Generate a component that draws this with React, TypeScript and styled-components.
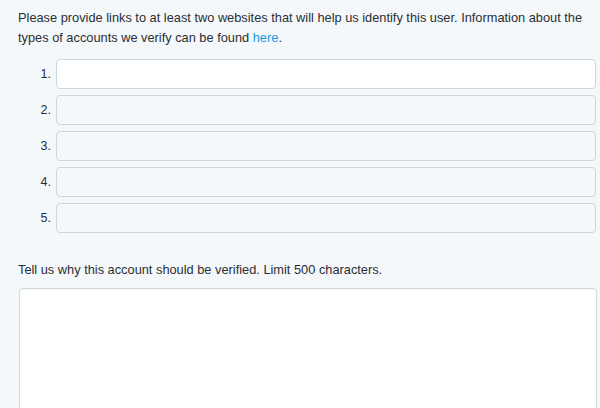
import { createGlobalStyle, styled } from "styled-components";

const GlobalStyle = createGlobalStyle`
  html, body {
    margin: 0;
    padding: 0;
    background: #f5f8fa;
  }
  body {
    font-family: "Liberation Sans", Arial, sans-serif;
    color: #292f33;
  }
`;

const Page = styled.div`
  width: 600px;
  height: 408px;
  overflow: hidden;
  padding: 8px 4px 0 18px;
  box-sizing: border-box;
`;

const Intro = styled.p`
  margin: 0;
  font-size: 12.8px;
  line-height: 20px;
`;

const Link = styled.a`
  color: #1b95e0;
  text-decoration: none;
`;

const List = styled.ol`
  list-style: none;
  margin: 11px 0 0 0;
  padding: 0;
  display: flex;
  flex-direction: column;
  gap: 6px;
`;

const Row = styled.li`
  display: flex;
  align-items: center;
  gap: 5px;
`;

const Num = styled.span`
  width: 33px;
  text-align: right;
  font-size: 12.5px;
`;

const UrlInput = styled.input<{ $active?: boolean }>`
  flex: 1;
  height: 30px;
  box-sizing: border-box;
  border: 1px solid #ccd6dd;
  border-radius: 4px;
  background: ${(p) => (p.$active ? "#ffffff" : "#f5f8fa")};
  font: inherit;
  outline: none;
`;

const Label = styled.p`
  margin: 27px 0 0 0;
  font-size: 12.8px;
  line-height: 20px;
`;

const Reason = styled.textarea`
  display: block;
  width: 578px;
  height: 160px;
  margin: 8px 0 0 1px;
  box-sizing: border-box;
  border: 1px solid #ccd6dd;
  border-radius: 4px;
  background: #ffffff;
  resize: none;
  outline: none;
`;

export default function App() {
  return (
    <>
      <GlobalStyle />
      <Page>
        <Intro>
          Please provide links to at least two websites that will help us
          identify this user. Information about the types of accounts we
          verify can be found <Link href="#">here</Link>.
        </Intro>
        <List>
          {[1, 2, 3, 4, 5].map((n) => (
            <Row key={n}>
              <Num>{n}.</Num>
              <UrlInput $active={n === 1} />
            </Row>
          ))}
        </List>
        <Label>Tell us why this account should be verified. Limit 500 characters.</Label>
        <Reason />
      </Page>
    </>
  );
}
